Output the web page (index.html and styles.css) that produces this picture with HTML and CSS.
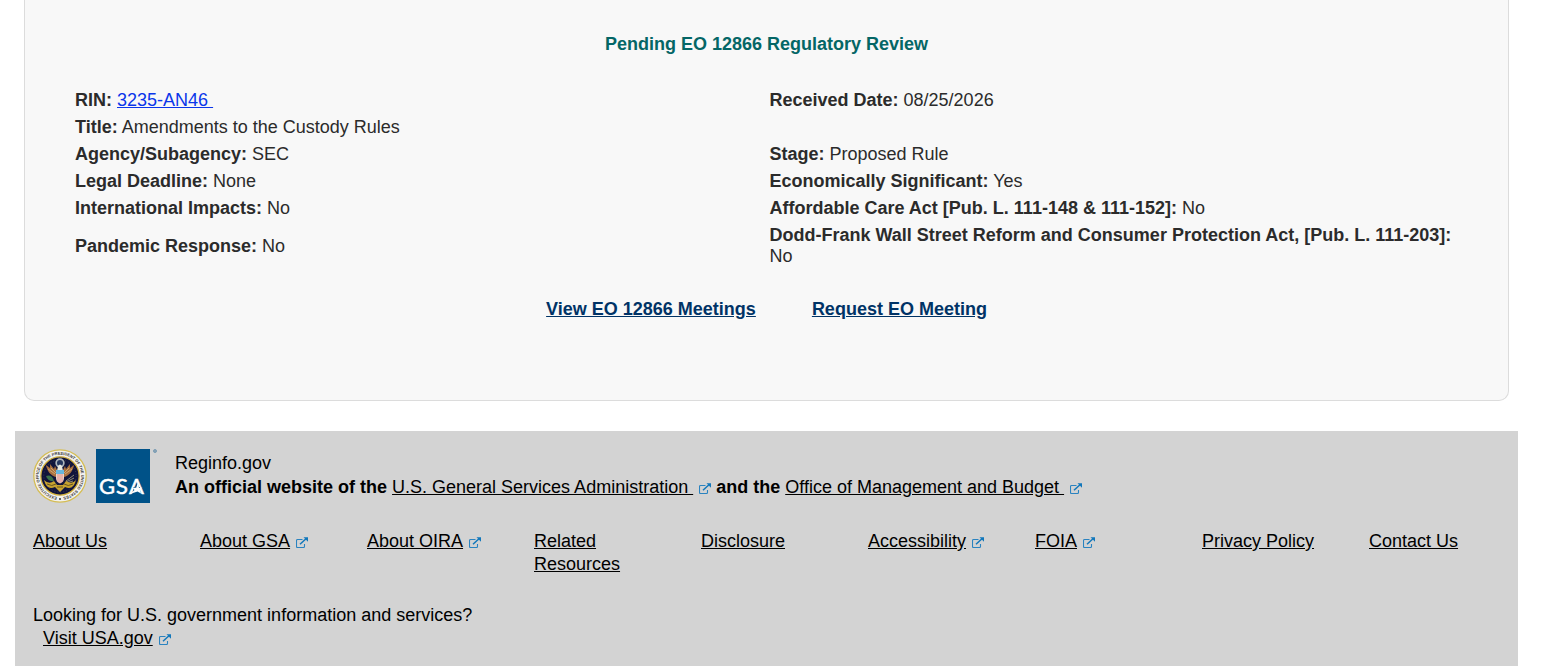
FILE: index.html
```html
<!DOCTYPE html>
<html lang="en">
	<head>
		<meta charset="utf-8">
		<title>Pending EO 12866 Regulatory Review</title>
		<link rel="stylesheet" href="styles.css">
	</head>
	<body>
		<!-- shared external link icon -->
		<svg class="sprite" aria-hidden="true">
			<symbol id="ext" viewBox="0 0 12 11">
				<path d="M6.5 2.5H1.5Q.5 2.5 .5 3.5V9.5Q.5 10.5 1.5 10.5H7.5Q8.5 10.5 8.5 9.5V7" fill="none" stroke="#2a83c0" stroke-width="1.1"/>
				<path d="M4 7.2L10 1.8" fill="none" stroke="#1177bb" stroke-width="1.5"/>
				<path d="M7.5 .3H12V4.8z" fill="#1177bb"/>
			</symbol>
		</svg>

		<main class="panel">
			<h1 class="panel-title">Pending EO 12866 Regulatory Review</h1>
			<table class="details">
				<tr>
					<td><b>RIN:</b> <a class="rin" href="#">3235-AN46&nbsp;</a></td>
					<td><b>Received Date:</b> 08/25/2026</td>
				</tr>
				<tr>
					<td colspan="2"><b>Title:</b> Amendments to the Custody Rules</td>
				</tr>
				<tr>
					<td><b>Agency/Subagency:</b> SEC</td>
					<td><b>Stage:</b> Proposed Rule</td>
				</tr>
				<tr>
					<td><b>Legal Deadline:</b> None</td>
					<td><b>Economically Significant:</b> Yes</td>
				</tr>
				<tr>
					<td><b>International Impacts:</b> No</td>
					<td><b>Affordable Care Act [Pub. L. 111-148 &amp; 111-152]:</b> No</td>
				</tr>
				<tr>
					<td><b>Pandemic Response:</b> No</td>
					<td><b>Dodd-Frank Wall Street Reform and Consumer Protection Act, [Pub. L. 111-203]:</b> No</td>
				</tr>
			</table>
			<div class="meetings">
				<a href="#">View EO 12866 Meetings</a>
				<a href="#">Request EO Meeting</a>
			</div>
		</main>

		<footer class="footer">
			<div class="identity">
				<svg class="seal" viewBox="0 0 54 54" role="img" aria-label="Executive Office of the President of the United States">
					<defs>
						<path id="ring" d="M26 48.1A21.2 21.2 0 1 1 28 48.1"/>
					</defs>
					<circle cx="27" cy="27" r="26.2" fill="#f2f1ee" stroke="#d5bd54" stroke-width="1.3"/>
					<circle cx="27" cy="27" r="19.2" fill="#11143b" stroke="#d2b13f" stroke-width="1.3"/>
					<circle cx="27" cy="27" r="16.2" fill="none" stroke="#4b4a55" stroke-width=".7" stroke-dasharray="1 2"/>
					<text class="seal-text"><textPath href="#ring" startOffset="2">EXECUTIVE OFFICE OF THE PRESIDENT OF THE UNITED STATES</textPath></text>
					<circle cx="27" cy="50" r=".9" fill="#222"/>
					<!-- wings -->
					<path d="M23 28C18 27 14 22 13 16L17 19 17 15 21 20 22 17 25 23zM31 28C36 27 40 22 41 16L37 19 37 15 33 20 32 17 29 23z" fill="#a8703f"/>
					<path d="M15 20L22 25M18 19L23 24M39 20L32 25M36 19L31 24" stroke="#d9b27a" stroke-width=".8"/>
					<!-- branch and arrows -->
					<path d="M13 27Q19 25 21 32Q15 33 13 27" fill="#39704a"/>
					<path d="M33 32L41 26M33 33L41 29M33 34L40 32" stroke="#8f8a72" stroke-width="1"/>
					<path d="M11 31Q16 36 21 32L24 36H30L33 32Q39 36 43 31Q40 42 32 38L27 43 22 38Q14 42 11 31" fill="#c7a22f"/>
					<path d="M14 35Q19 38 23 35M40 35Q35 38 31 35M24 38H30" stroke="#665622" stroke-width="1" fill="none"/>
					<circle cx="27" cy="14" r="4.7" fill="#aeb5bc"/>
					<circle cx="27" cy="14" r="3" fill="#25365f"/>
					<path d="M25 17Q27 14 29 17L30 22H24z" fill="#e9e7df"/>
					<path d="M23 21H31V29Q31 33 27 34.5Q23 33 23 29z" fill="#f0d3cc"/>
					<path d="M23 21H31V25H23z" fill="#67b6df"/>
					<path d="M25 25V33M27 25V34M29 25V33" stroke="#d98078" stroke-width=".8"/>
				</svg>
				<svg class="gsa" viewBox="0 0 61 54" role="img" aria-label="GSA">
					<rect width="54" height="54" fill="#005288"/>
					<text class="gsa-text" y="45" x="3 20 33">GSA</text>
					<!-- star over the crossbar of the A -->
					<path d="M37.5 38H44L44 46H37z" fill="#005288"/>
					<path d="M34 45L38.5 41 36.5 38.7H40.2L41.5 34.5 43 38.7H46.5L43.8 40.8 45 44.5 41.5 42.4z" fill="#fff"/>
					<circle cx="59" cy="2" r="1.5" fill="#8fa8b9" stroke="#5f8caa" stroke-width=".7"/>
				</svg>
				<div class="official">
					<div>Reginfo.gov</div>
					<div>
						<b>An official website of the</b>
						<a href="#">U.S. General Services Administration&nbsp;<svg class="ext"><use href="#ext"/></svg></a>
						<b>and the</b>
						<a href="#">Office of Management and Budget&nbsp;<svg class="ext"><use href="#ext"/></svg></a>
					</div>
				</div>
			</div>

			<nav class="links">
				<div><a href="#">About Us</a></div>
				<div><a href="#">About GSA<svg class="ext"><use href="#ext"/></svg></a></div>
				<div><a href="#">About OIRA<svg class="ext"><use href="#ext"/></svg></a></div>
				<div><a href="#">Related Resources</a></div>
				<div><a href="#">Disclosure</a></div>
				<div><a href="#">Accessibility<svg class="ext"><use href="#ext"/></svg></a></div>
				<div><a href="#">FOIA<svg class="ext"><use href="#ext"/></svg></a></div>
				<div><a href="#">Privacy Policy</a></div>
				<div><a href="#">Contact Us</a></div>
			</nav>

			<div class="usa">
				<div>Looking for U.S. government information and services?</div>
				<a href="#">Visit USA.gov<svg class="ext"><use href="#ext"/></svg></a>
			</div>
		</footer>
	</body>
</html>
```

FILE: styles.css
```css
* {
	box-sizing: border-box;
}

body {
	margin: 0 39px 0 15px;
	background-color: white;
	color: #2b2b2b;
	font-family: "Liberation Sans", Arial, sans-serif;
	font-size: 18px;
	line-height: 21px;
}

.sprite {
	display: none;
}

.panel {
	margin: 0 9px 30px;
	padding: 34px 47px 80px;
	border: 1px solid #dcdcdc;
	border-top: none;
	border-radius: 0 0 10px 10px;
	background-color: #f8f8f8;
}

.panel-title {
	margin: 0 0 32px;
	color: #046666;
	font-size: 18px;
	line-height: 21px;
	text-align: center;
}

.details {
	width: 100%;
	table-layout: fixed;
	border-collapse: collapse;
}

.details td {
	padding: 3px;
}

.rin {
	color: #0a36ea;
}

.meetings {
	display: flex;
	justify-content: center;
	gap: 56px;
	margin-top: 29px;
}

.meetings a {
	color: #003366;
	font-weight: bold;
}

.footer {
	padding: 18px 0 16px;
	background-color: #d3d3d3;
	color: black;
	line-height: 23px;
}

.footer a {
	color: black;
}

.identity {
	display: flex;
	padding: 0 18px;
}

.seal {
	width: 54px;
	height: 54px;
	margin-right: 9px;
	overflow: visible;
}

.seal-text {
	fill: #333333;
	font-size: 4px;
	font-family: "Liberation Sans", Arial, sans-serif;
	font-weight: bold;
}

.gsa {
	width: 61px;
	height: 54px;
	margin-right: 18px;
}

.gsa-text {
	fill: white;
	font-family: Lato, sans-serif;
	font-size: 22px;
	stroke: white;
	stroke-width: 0.5;
}

.official {
	padding-top: 2px;
	line-height: 24px;
}

.ext {
	width: 12px;
	height: 11px;
	margin-left: 6px;
	vertical-align: -1px;
}

.links {
	display: grid;
	grid-template-columns: repeat(9, 1fr);
	margin-top: 27px;
}

.links div {
	padding: 0 18px;
}

.usa {
	margin-top: 28px;
	padding: 0 18px;
}

.usa a {
	margin-left: 10px;
}
```
